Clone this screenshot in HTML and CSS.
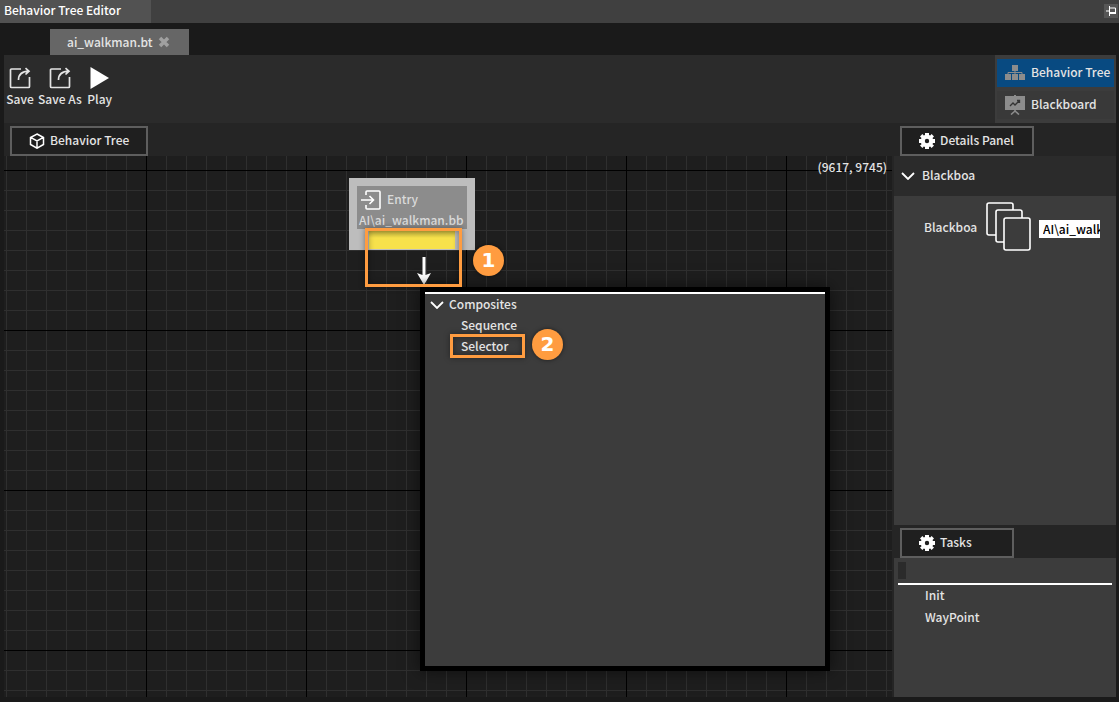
FILE: index.html
```html
<!DOCTYPE html>
<html lang="en">
<head>
<meta charset="utf-8">
<title>Behavior Tree Editor</title>
<link rel="stylesheet" href="styles.css">
</head>
<body>
<svg class="defs" aria-hidden="true">
  <symbol id="export" viewBox="0 0 22 22"><path d="M12 2H2.500Q1.500 2 1.500 3V19.500Q1.500 20.500 2.500 20.500H19.500Q20.500 20.500 20.500 19.500V10" fill="none" stroke="currentColor" stroke-width="1.700"/><path d="M9.500 13Q9.500 4.500 20 4.200M16.500 1.200L20 4.200L16.500 7.500" fill="none" stroke="currentColor" stroke-width="1.700"/></symbol>
  <symbol id="gear" viewBox="0 0 16 16"><path fill="#fff" fill-rule="evenodd" d="M6 0h4v2l1.200.6L12.600 1 15 3.400 13.500 5l.5 1H16v4h-2l-.5 1.200L15 12.600 12.600 15l-1.400-1.400L10 14v2H6v-2l-1.200-.4L3.400 15 1 12.600l1.500-1.400L2 10H0V6h2l.5-1L1 3.400 3.400 1l1.400 1.600L6 2zM8 5.800a2.200 2.200 0 1 0 0 4.400 2.200 2.200 0 0 0 0-4.400z"/></symbol>
  <symbol id="chevron" viewBox="0 0 14 8"><path d="M1 1l6 6 6-6" fill="none" stroke="#fff" stroke-width="1.800"/></symbol>
</svg>
<header class="titlebar">
  <h1 class="title">Behavior Tree Editor</h1>
  <button class="pin" aria-label="Pin window"><svg width="10" height="10" viewBox="0 0 10 10"><path d="M0 5h3M3.500 0v10M4 2h5.500v5H4" fill="none" stroke="#fff" stroke-width="1"/><path d="M4 7h6" stroke="#fff" stroke-width="2"/></svg></button>
</header>
<nav class="files">
  <div class="file">ai_walkman.bt<button class="close" aria-label="Close file"><svg width="12" height="12" viewBox="0 0 12 12"><path d="M2 2l8 8M10 2l-8 8" stroke="#a0a0a0" stroke-width="3.500"/></svg></button></div>
</nav>
<div class="workspace">
  <div class="toolbar">
    <div class="tools">
      <button class="tool"><svg width="22" height="22"><use href="#export"/></svg>Save</button>
      <button class="tool"><svg width="22" height="22"><use href="#export"/></svg>Save As</button>
      <button class="tool"><svg width="22" height="22" viewBox="0 0 22 22"><path d="M1.500 0L20 11 1.500 22z" fill="#fff"/></svg>Play</button>
    </div>
    <div class="modes">
      <button class="mode active"><svg width="20" height="16" viewBox="0 0 20 16"><path d="M7 0h6v6H7zM0 9h6v6H0zM7 9h6v6H7zM14 9h6v6h-6z" fill="#8c8c8c"/><path d="M10 5v5M3 10V7.500h14V10" fill="none" stroke="#8c8c8c"/></svg><span>Behavior Tree</span></button>
      <button class="mode"><svg width="20" height="20" viewBox="0 0 20 20"><path d="M0 1h9V0h2v1h9v14H0z" fill="#8c8c8c"/><path d="M5 11l3-3 2 2 4-4M12 5.500h2.500V8" fill="none" stroke="#333" stroke-width="1.300"/><path d="M10 15v1L6 19.500M10 16l4 3.500" fill="none" stroke="#8c8c8c" stroke-width="1.600"/></svg><span>Blackboard</span></button>
    </div>
  </div>
  <main class="main">
    <section class="graph">
      <div class="strip"><button class="tab"><svg width="16" height="16" viewBox="0 0 16 16"><path d="M8 1l6.500 3.500v7L8 15.200l-6.500-3.700v-7zM2 4.700L8 8l6-3.300M8 8v7" fill="none" stroke="#fff" stroke-width="1.500"/></svg><span>Behavior Tree</span></button></div>
      <div class="canvas">
        <span class="coords">(9617, 9745)</span>
        <div class="node">
          <div class="node-body">
            <div class="node-title"><svg width="20" height="20" viewBox="0 0 20 20"><path d="M5 5V2Q5 1 6 1h12q1 0 1 1v16q0 1-1 1H6q-1 0-1-1v-3M0 10h12M8.500 6l4 4-4 4" fill="none" stroke="#fff" stroke-width="1.600"/></svg><span>Entry</span></div>
            <div class="node-path">AI\ai_walkman.bb</div>
          </div>
          <div class="port"></div>
        </div>
        <svg class="arrow" width="16" height="28" viewBox="0 0 16 28"><path d="M6.500 0h3v18L15 16 8 28 1 16l5.500 2z" fill="#fff"/></svg>
        <div class="menu">
          <button class="group"><svg width="14" height="8"><use href="#chevron"/></svg><span>Composites</span></button>
          <button class="choice">Sequence</button>
          <button class="choice">Selector</button>
        </div>
        <div class="frame frame-port"></div>
        <div class="frame frame-choice"></div>
        <span class="step step-one">1</span>
        <span class="step step-two">2</span>
      </div>
    </section>
    <aside class="side">
      <section class="details">
        <div class="strip"><button class="tab tab-details"><svg width="16" height="16"><use href="#gear"/></svg><span>Details Panel</span></button></div>
        <button class="category"><svg width="14" height="8"><use href="#chevron"/></svg><span>Blackboa</span></button>
        <div class="property">
          <label class="name" for="asset">Blackboa</label>
          <svg width="46" height="50" viewBox="0 0 46 50"><g fill="#3c3c3c" stroke="#fff" stroke-width="1.600"><rect x="2" y="1" width="26" height="32" rx="2"/><rect x="11" y="8" width="26" height="32" rx="2"/><rect x="19" y="16" width="26" height="32" rx="2"/></g></svg>
          <input id="asset" class="asset" value="AI\ai_walkman.bb">
        </div>
      </section>
      <section class="tasks">
        <div class="strip"><button class="tab tab-tasks"><svg width="16" height="16"><use href="#gear"/></svg><span>Tasks</span></button></div>
        <div class="search"><input class="query" aria-label="Search tasks"></div>
        <ul class="list"><li>Init</li><li>WayPoint</li></ul>
      </section>
    </aside>
  </main>
</div>
</body>
</html>
```

FILE: styles.css
```css
* { box-sizing: border-box; }
body {
  margin: 0;
  height: 100vh;
  display: flex;
  flex-direction: column;
  overflow: hidden;
  background: #1a1a1a;
  color: #e4e4e4;
  font: 500 12px/18px "Noto Sans CJK SC", "Noto Sans", sans-serif;
}
button, input { font: inherit; color: inherit; border: 0; padding: 0; background: none; }
button { text-align: left; white-space: nowrap; }
svg { display: block; flex: none; }
.defs { position: absolute; width: 0; height: 0; }
.tab span, .mode span, .group span, .category span, .node-title span { padding-bottom: 2px; }

.titlebar { display: flex; justify-content: space-between; height: 23px; background: #404040; }
.title { margin: 0; width: 151px; padding: 1px 0 0 4px; font: inherit; color: #fff; background: #525252; }
.pin { display: grid; place-items: center; width: 14px; height: 14px; margin: 4px 1px; background: #565656; }

.files { display: flex; padding: 6px 0 0 50px; height: 32px; }
.file { display: flex; align-items: center; gap: 5px; padding: 0 19px 1px 17px; background: #666; }

.workspace { flex: 1; min-height: 0; display: flex; flex-direction: column; margin: 0 3px 5px 4px; background: #252525; }
.toolbar { display: flex; justify-content: space-between; height: 68px; background: #2b2b2b; }
.tools { display: flex; align-items: flex-start; gap: 4px; padding: 12px 2px; }
.tool { display: flex; flex-direction: column; align-items: center; gap: 1px; min-width: 28px; }
.modes { width: 121px; padding: 4px 2px; background: #3c3c3c; }
.mode { display: flex; align-items: center; width: 100%; gap: 6px; height: 28px; padding-left: 8px; margin-bottom: 4px; }
.mode:last-child { background: #393939; }
.mode.active { background: #084a81; }

.main { flex: 1; min-height: 0; display: grid; grid-template-columns: 1fr 222px; gap: 2px; }
.graph, .side, .tasks, .details { min-height: 0; display: flex; flex-direction: column; }
.strip { height: 33px; padding: 3px 6px 0; flex: none; }
.tab { display: flex; align-items: center; gap: 5px; width: 138px; height: 30px; padding-left: 17px; border: 2px solid #5e5e5e; background: #1f1f1f; }
.tab-details { width: 134px; }
.tab-tasks { width: 114px; }

.canvas {
  position: relative;
  flex: 1;
  background-color: #1e1e1e;
  background-image:
    linear-gradient(90deg, #000 1px, transparent 1px),
    linear-gradient(#000 1px, transparent 1px),
    linear-gradient(90deg, #2f2f2f 1px, transparent 1px),
    linear-gradient(#2f2f2f 1px, transparent 1px);
  background-size: 160px 160px, 160px 160px, 20px 20px, 20px 20px;
  background-position: 142px 14px, 142px 14px, 2px 14px, 2px 14px;
}
.coords { position: absolute; top: 2px; right: 5px; }
.node { position: absolute; left: 345px; top: 22px; width: 126px; height: 72px; padding: 8px; color: #dadada; background: #bdbdbd; }
.node-body { height: 43px; background: #8c8c8c; }
.node-title { display: flex; align-items: center; gap: 6px; padding: 4px 4px 0; }
.node-path { padding: 1px 0 0 2px; white-space: nowrap; }
.port { width: 86px; height: 20px; margin-left: 12px; background: linear-gradient(#b4a83a, #f7e14b 9px); }
.arrow { position: absolute; left: 412px; top: 101px; }
.menu { position: absolute; left: 416px; top: 131px; width: 410px; height: 384px; border: 5px solid #000; background: #3c3c3c; box-shadow: 0 0 16px #0008; }
.group { display: flex; align-items: center; gap: 5px; width: 100%; height: 23px; padding-left: 5px; border-top: 2px solid #fff; }
.choice { display: block; height: 21px; padding: 0 0 2px 36px; }
.frame { position: absolute; border: 3px solid #ff9c40; box-shadow: 0 0 6px #0006, inset 0 0 6px #0006; }
.frame-port { left: 361px; top: 72px; width: 97px; height: 59px; }
.frame-choice { left: 446px; top: 178px; width: 75px; height: 24px; }
.step { position: absolute; width: 31px; height: 31px; border-radius: 50%; background: #ff9c40; color: #fff; font: bold 20px/31px "DejaVu Sans", sans-serif; text-align: center; box-shadow: 0 0 4px #0008; }
.step-one { left: 469px; top: 89px; }
.step-two { left: 528px; top: 173px; }

.details { flex: 402; }
.tasks { flex: 172; }
.category { display: flex; align-items: center; gap: 7px; height: 40px; padding-left: 7px; background: #2b2b2b; }
.property { flex: 1; display: flex; align-items: flex-start; padding: 6px 16px 0 30px; background: #3c3c3c; }
.name { width: 51px; margin: 16px 10px 0 0; white-space: nowrap; }
.asset { flex: 1; min-width: 0; height: 18px; margin: 18px 0 0 8px; padding: 0 0 1px 4px; background: #fff; color: #000; }
.search { padding: 4px 4px 0; background: #3c3c3c; }
.query { display: block; width: 100%; height: 23px; border-bottom: 2px solid #fff; background: linear-gradient(#2b2b2b, #2b2b2b) 0 0 / 8px 17px no-repeat; }
.list { flex: 1; margin: 0; padding: 0 0 0 31px; list-style: none; background: #3c3c3c; }
.list li { padding: 1px 0 3px; }
```
